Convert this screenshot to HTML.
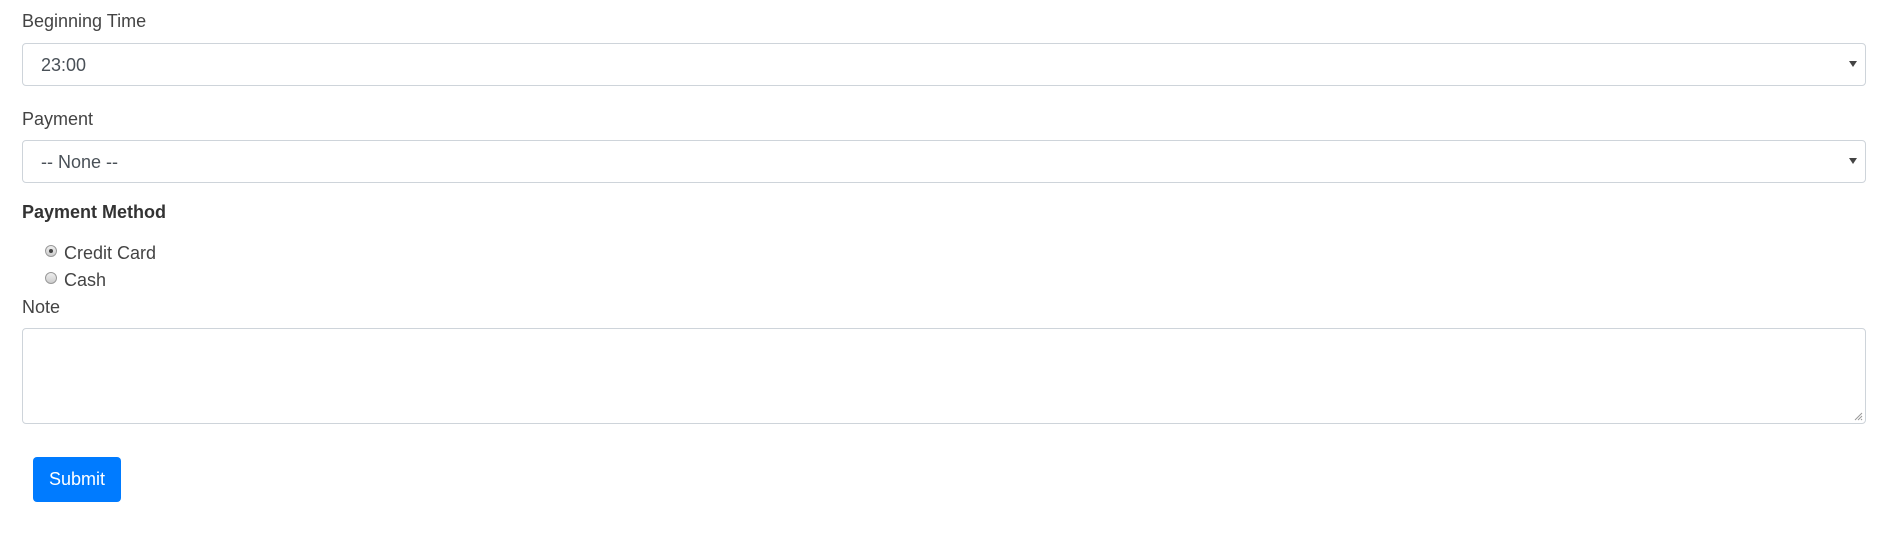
<!DOCTYPE html>
<html><head><style>
body{margin:0;background:#fff;font-family:"Liberation Sans",sans-serif;color:#495057;font-size:18px;}
.lbl{position:absolute;left:22px;color:#444;font-size:18px;line-height:20px;}
.box{position:absolute;left:22px;width:1844px;border:1px solid #ced4da;border-radius:4px;box-sizing:border-box;background:#fff;}
.sel{height:43px;}
.sel span{position:absolute;left:18px;top:11px;color:#495057;line-height:20px;}
.sel i{position:absolute;right:8px;top:17px;width:0;height:0;border-left:4px solid transparent;border-right:4px solid transparent;border-top:6px solid #444;}
.radio{position:absolute;left:45px;width:12px;height:12px;border-radius:50%;border:1px solid #999;box-sizing:border-box;background:linear-gradient(#eee,#ccc);}
.btn{position:absolute;left:33px;top:457px;width:88px;height:45px;background:#007bff;border-radius:4px;color:#fff;text-align:center;line-height:45px;font-size:18px;}
</style></head><body>
<div class="lbl" style="top:11px">Beginning Time</div>
<div class="box sel" style="top:43px"><span>23:00</span><i></i></div>
<div class="lbl" style="top:109px">Payment</div>
<div class="box sel" style="top:140px"><span>-- None --</span><i></i></div>
<div class="lbl" style="top:202px;font-weight:bold;color:#333">Payment Method</div>
<div class="radio" style="top:245px"><div style="width:4px;height:4px;border-radius:50%;background:#444;margin:3px"></div></div>
<div class="lbl" style="left:64px;top:243px">Credit Card</div>
<div class="radio" style="top:272px"></div>
<div class="lbl" style="left:64px;top:270px">Cash</div>
<div class="lbl" style="top:297px">Note</div>
<div class="box" style="top:328px;height:96px"><svg style="position:absolute;right:2px;bottom:2px" width="10" height="10"><path d="M9 2L2 9M9 5L5 9M9 8L8 9" stroke="#999" stroke-width="1"/></svg></div>
<div class="btn">Submit</div>
</body></html>
